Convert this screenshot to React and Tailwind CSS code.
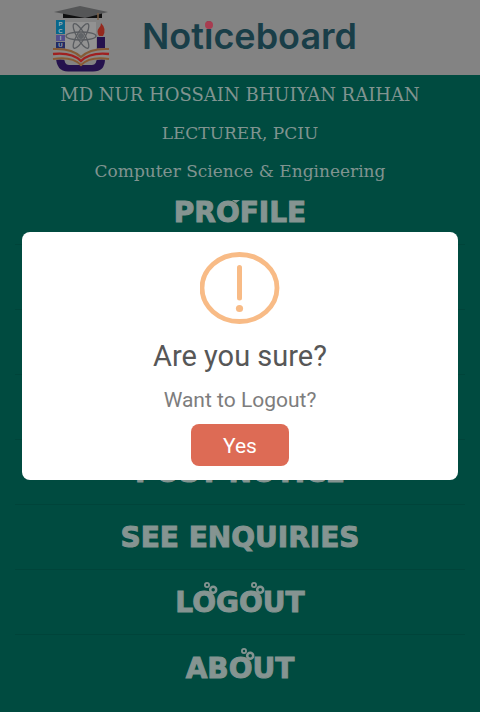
import React from "react";

function CollegeLogo() {
  return (
    <svg viewBox="0 0 60 72" className="h-[72px] w-[60px] shrink-0" role="img" aria-label="PCIU logo">
      <rect x="15" y="20" width="31" height="34" fill="#929292" />
      <path d="M6 54 Q6 69.500 18 69.500 H43 Q55 69.500 55 57 V35 H47 V54 Q47 63 42 63 H19 Q14 63 14 54Z" fill="#25124d" />
      <path d="M13 10 H52 V16 H13Z" fill="#101010" />
      <path d="M4 10 L30 4 L58 10 L35 16Z" fill="#555657" />
      <path d="M48 11 V18" stroke="#7d6046" strokeWidth="1.5" />
      <rect x="6" y="18" width="9" height="14" fill="#08678b" />
      <rect x="6" y="33" width="9" height="6" fill="#514f8d" />
      <rect x="6" y="40" width="9" height="7" fill="#252c63" />
      <g fill="#a2b1b8" fontFamily="Liberation Sans, sans-serif" fontWeight="700" fontSize="6" textAnchor="middle">
        <text x="10.500" y="24">P</text>
        <text x="10.500" y="31">C</text>
        <text x="10.500" y="38">I</text>
        <text x="10.500" y="45">U</text>
      </g>
      <g fill="none" stroke="#595c60" strokeWidth="1.3">
        <ellipse cx="31" cy="34" rx="15" ry="4" />
        <ellipse cx="31" cy="34" rx="14" ry="4" transform="rotate(60 31 34)" />
        <ellipse cx="31" cy="34" rx="14" ry="4" transform="rotate(120 31 34)" />
      </g>
      <circle cx="31" cy="34" r="3" fill="#606367" />
      <path d="M51 21 Q57 27 53 34 H49 Q46 29 49 26 Q51 24 51 21Z" fill="#94291e" />
      <path d="M3 46 Q22 45 31 54 Q40 45 59 46 V58 Q40 56 31 64 Q22 56 3 58Z" fill="#8b8784" />
      <g fill="none">
        <path d="M3 47 Q22 46 31 55 Q40 46 59 47" stroke="#865a35" strokeWidth="2" />
        <path d="M3 52 Q22 50 31 59 Q40 50 59 52" stroke="#a02020" strokeWidth="2.4" />
        <path d="M3 57 Q22 54 31 63 Q40 54 59 57" stroke="#865a35" strokeWidth="2" />
      </g>
    </svg>
  );
}

function BubbleO() {
  return (
    <span className="relative">
      O
      <svg viewBox="0 0 14 12" className="absolute -top-1 left-3 h-3 w-3.5" fill="none" stroke="currentColor" aria-hidden="true">
        <circle cx="3" cy="3" r="2.1" strokeWidth="1.8" />
        <circle cx="9.2" cy="7.8" r="3" strokeWidth="2.500" />
      </svg>
    </span>
  );
}

function AccentO() {
  return (
    <span className="relative">
      O
      <svg viewBox="0 0 8 3" className="absolute top-1 left-4 h-[3px] w-2" fill="currentColor" aria-hidden="true">
        <path d="M0 0H8L4 3Z" />
      </svg>
    </span>
  );
}

const items = [
  { id: "post", label: "POST NOTICE" },
  { id: "enquiries", label: "SEE ENQUIRIES" },
  { id: "logout", label: <>L<BubbleO />G<BubbleO />UT</> },
  { id: "about", label: <>AB<BubbleO />UT</> },
];

const linkClass = "leading-8";

export default function App() {
  return (
    <div className="min-h-screen bg-[#004b40] font-['Roboto',sans-serif]">
      <header className="flex h-[75px] items-center gap-8 bg-[#838383] pl-[50px]">
        <CollegeLogo />
        <h1 className="pb-1 font-['Inter',sans-serif] text-[36px] leading-10 font-semibold text-[#193e48]">
          Not
          <span className="relative">
            i
            <span className="absolute top-[7px] left-px h-2 w-2 rounded-full bg-[#a83c50]" />
          </span>
          ceboard
        </h1>
      </header>

      <main>
        <section className="pt-px text-center font-['DejaVu_Serif',serif] leading-[38px] text-[#809490]">
          <p className="text-[18px]">MD NUR HOSSAIN BHUIYAN RAIHAN</p>
          <p className="text-[17px]">LECTURER, PCIU</p>
          <p className="text-[17px]">Computer Science &amp; Engineering</p>
        </section>
        <nav className="px-[15px] font-['DejaVu_Sans',sans-serif] text-[28px] font-bold text-[#859491] [-webkit-text-stroke:1px_#859491]">
          <ul>
            <li className="flex h-[55px] items-center justify-center border-b border-[#00443a] pb-2">
              <a href="#profile" className={linkClass}>PR<AccentO />FILE</a>
            </li>
            <li aria-hidden="true" className="h-[65px] border-b border-[#00443a]" />
            <li aria-hidden="true" className="h-[65px] border-b border-[#00443a]" />
            <li aria-hidden="true" className="h-[65px] border-b border-[#00443a]" />
            {items.map((item) => (
              <li key={item.id} className="flex h-[65px] items-center justify-center border-b border-[#00443a] pt-0.5 last:border-0">
                <a href={`#${item.id}`} className={linkClass}>{item.label}</a>
              </li>
            ))}
          </ul>
        </nav>
      </main>

      <div className="fixed inset-0 flex items-center justify-center px-[22px]">
        <div
          role="dialog"
          aria-modal="true"
          aria-labelledby="dialog-title"
          className="flex w-full max-w-lg flex-col items-center rounded-lg bg-white pt-5 pb-3.5"
        >
          <svg viewBox="0 0 80 72" className="h-[72px] w-20" fill="none" aria-hidden="true">
            <ellipse cx="39.500" cy="36" rx="37.5" ry="33.5" stroke="#f8bb86" strokeWidth="4.8" />
            <path d="M39.500 15.500V46" stroke="#f8bb86" strokeWidth="5" strokeLinecap="round" />
            <circle cx="39.500" cy="56.500" r="3.600" fill="#f8bb86" />
          </svg>
          <h2 id="dialog-title" className="mt-3 text-[29px] leading-10 text-[#575757]">Are you sure?</h2>
          <p className="mt-2.5 text-[21px] leading-7 text-[#7d7d7d]">Want to Logout?</p>
          <button type="button" className="mt-2.5 h-[42px] w-[98px] rounded-lg bg-[#dd6b55] pt-1 text-[21px] text-white">
            Yes
          </button>
        </div>
      </div>
    </div>
  );
}
